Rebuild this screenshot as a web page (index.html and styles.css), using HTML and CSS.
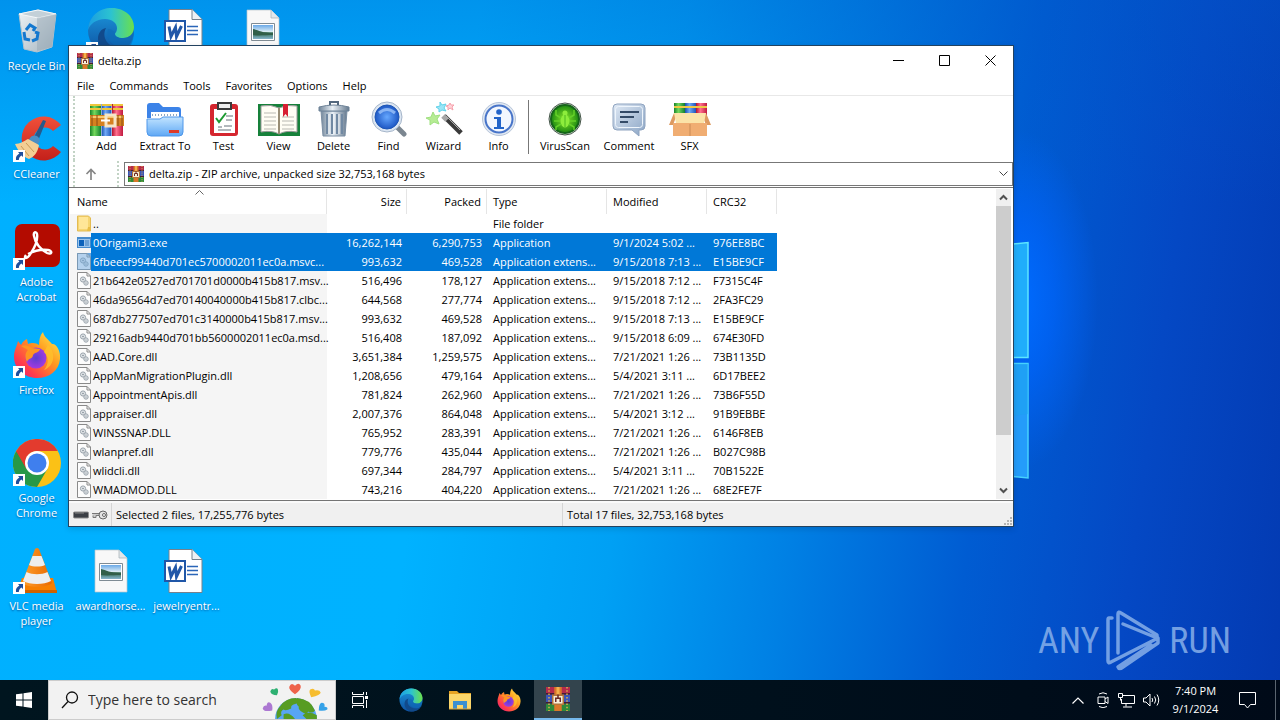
FILE: index.html
```html
<!DOCTYPE html>
<html lang="en">
<head>
<meta charset="utf-8">
<title>delta.zip</title>
<link rel="stylesheet" href="styles.css">
</head>
<body>
<svg class="sprite" aria-hidden="true">
  <defs>
    <linearGradient id="g-edge" x1="0" y1="0" x2="1" y2="0"><stop offset="0" stop-color="#1b9de2"/><stop offset=".5" stop-color="#2cc3d0"/><stop offset="1" stop-color="#6be04c"/></linearGradient>
    <linearGradient id="g-edge2" x1="0" y1="0" x2="0" y2="1"><stop offset="0" stop-color="#1c98dd"/><stop offset="1" stop-color="#0d50a0"/></linearGradient>
    <linearGradient id="g-fox" x1="1" y1="0" x2="0" y2="1"><stop offset="0" stop-color="#fff44f"/><stop offset=".4" stop-color="#ff9a1f"/><stop offset=".75" stop-color="#ff3c4c"/><stop offset="1" stop-color="#e31587"/></linearGradient>
    <radialGradient id="g-foxin"><stop offset="0" stop-color="#5a3fd0"/><stop offset="1" stop-color="#a33ae0"/></radialGradient>
    <linearGradient id="g-bin" x1="0" y1="0" x2="1" y2="1"><stop offset="0" stop-color="#eef3f6"/><stop offset="1" stop-color="#a4b4bf"/></linearGradient>
    <linearGradient id="g-cc" x1="0" y1="0" x2="0" y2="1"><stop offset="0" stop-color="#f0503a"/><stop offset="1" stop-color="#c4201a"/></linearGradient>
    <linearGradient id="g-pic" x1="0" y1="0" x2="0" y2="1"><stop offset="0" stop-color="#6aa9e8"/><stop offset=".5" stop-color="#e0eff5"/><stop offset=".55" stop-color="#2f6b50"/><stop offset="1" stop-color="#86b4cc"/></linearGradient>
    <linearGradient id="g-fold" x1="0" y1="0" x2="0" y2="1"><stop offset="0" stop-color="#c2e4ff"/><stop offset="1" stop-color="#5fa8f5"/></linearGradient>
    <linearGradient id="g-steel" x1="0" y1="0" x2="1" y2="0"><stop offset="0" stop-color="#73879b"/><stop offset=".45" stop-color="#e9f0f6"/><stop offset="1" stop-color="#65798e"/></linearGradient>
    <linearGradient id="g-cmt" x1="0" y1="0" x2="1" y2="1"><stop offset="0" stop-color="#dfe9f5"/><stop offset="1" stop-color="#8ba5c5"/></linearGradient>
    <radialGradient id="g-lens"><stop offset="0" stop-color="#66a8ff"/><stop offset="1" stop-color="#1d57c4"/></radialGradient>
    <radialGradient id="g-virus"><stop offset="0" stop-color="#8be62c"/><stop offset="1" stop-color="#1c8a10"/></radialGradient>
    <linearGradient id="g-cone" x1="0" y1="0" x2="1" y2="0"><stop offset="0" stop-color="#ff9e2c"/><stop offset="1" stop-color="#e96a00"/></linearGradient>
    <linearGradient id="g-red" x1="0" y1="0" x2="1" y2="0"><stop offset="0" stop-color="#b3122f"/><stop offset=".4" stop-color="#ff6f8f"/><stop offset="1" stop-color="#c01a3f"/></linearGradient>
    <linearGradient id="g-green" x1="0" y1="0" x2="1" y2="0"><stop offset="0" stop-color="#17832a"/><stop offset=".4" stop-color="#74d85c"/><stop offset="1" stop-color="#128030"/></linearGradient>
    <linearGradient id="g-blue" x1="0" y1="0" x2="1" y2="0"><stop offset="0" stop-color="#1a4fae"/><stop offset=".4" stop-color="#6fa8f6"/><stop offset="1" stop-color="#1e55b8"/></linearGradient>
  </defs>
  <symbol id="rar" viewBox="0 0 16 16">
    <path d="M0 0h16v5H0z" fill="#b32b4c"/><path d="M0 5h16v6H0z" fill="#3b55b6"/><path d="M0 11h16v5H0z" fill="#2d8a3a"/>
    <path d="M0 4.500h16M0 10.500h16" stroke="#461c33"/><path d="M2 0v16M14 0v16" stroke="#e0b04a" stroke-dasharray="1 1.200"/>
    <path d="M5.500 0h5v16h-5z" fill="#d9782a"/><path d="M7 0h2v5H7z" fill="#f4b04c"/><path d="M4.500 5.500h7v6h-7z" fill="#f7eed8" stroke="#b4763a"/><path d="M6.500 10V7.500h3V10M8 5v3" fill="none" stroke="#6d2a25"/>
  </symbol>
  <symbol id="dll" viewBox="0 0 14 17">
    <path d="M.5.5H10l3.500 3.500V16.500H.5z" fill="#fcfcfc" stroke="#8a8a8a"/><path d="M10 .5V4h3.500" fill="none" stroke="#8a8a8a"/>
    <circle cx="6" cy="7.500" r="2.600" fill="#dfe3e6" stroke="#9aa4ac"/><circle cx="6" cy="7.500" r=".8" fill="#7e8a94"/><circle cx="9" cy="11" r="2.200" fill="#dfe3e6" stroke="#9aa4ac"/><circle cx="9" cy="11" r=".6" fill="#7e8a94"/>
  </symbol>
  <symbol id="shortcut" viewBox="0 0 12 12">
    <path d="M0 0h12v12H0z" fill="#fff"/><path d="M5 2h5v5L8.400 5.500C6.500 7 6 8 5.800 10H3C2.500 7 4 5 6.400 3.600z" fill="#1f4f9c"/>
  </symbol>
  <symbol id="word" viewBox="0 0 48 48">
    <path d="M14 2.500h23l10 10V45.500H14z" fill="#fff" stroke="#77818c"/><path d="M37 2.500v10h10" fill="#eef1f4" stroke="#77818c"/>
    <path d="M32 19.500h11M32 23.500h11M32 27.500h11" stroke="#2b66b8" stroke-width="1.500"/>
    <path d="M10 14h20v20H10z" fill="#fff" stroke="#2057a8" stroke-width="2"/><path d="M14 19.500l2 10 4.500-9 1 9 5-10.500" fill="none" stroke="#2057a8" stroke-width="3"/>
  </symbol>
  <symbol id="photo" viewBox="0 0 48 48">
    <path d="M8 3h24l8 8v34H8z" fill="#f8f8f8" stroke="#b9c4cb" stroke-width=".7"/><path d="M32 3v8h8" fill="#e2e7ea" stroke="#a5afb5" stroke-width=".7"/>
    <path d="M12.500 16.500h23v17h-23z" fill="#fff" stroke="#7f8b94"/><path d="M14 18h20v14H14z" fill="url(#g-pic)"/><path d="M14 22c5 1 9 4 20 4v2c-8 0-14 1-20 0z" fill="#315f49"/>
  </symbol>
  <symbol id="edge" viewBox="0 0 48 48">
    <circle cx="24" cy="24" r="23" fill="url(#g-edge2)"/>
    <path d="M1 23C2 9 12 1 25 1c13 0 22 9 22 19 0 7-5 11-11 11-5 0-8-2-8-4 0-1 2-2 2-6 0-5-5-9-12-9C9 12 3 17 1 23z" fill="url(#g-edge)"/>
    <path d="M19 21c-5 9 2 20 14 20 4 0 8-1 11-3-4 6-11 9-19 9-8-1-14-8-14-15 0-6 3-10 8-11z" fill="#114a8b"/>
    <path d="M28 27c0 3 4 5 9 4 5 0 8-3 10-7 0 5-1 10-3 14-3 2-15 5-22-5-2-4-2-8-1-11 3 0 7 2 7 5z" fill="#0e6bb8" opacity=".65"/>
  </symbol>
  <symbol id="firefox" viewBox="0 0 48 48">
    <path d="M30 1c1 5 5 7 9 12 4-1 9 7 8 15-1 12-11 19-23 19S1 38 1 26c0-7 3-11 4-16l3 4c2-4 4-5 6-6l1 5c5-2 8-1 11 1 0-5 1-10 4-13z" fill="url(#g-fox)"/>
    <circle cx="23" cy="27" r="10.500" fill="url(#g-foxin)"/>
    <path d="M8 15c5-2 8 0 11 2l8 1c-1 4-5 3-7 6 0 4-5 3-6 7-3-6-1-10 1-12z" fill="#ff9521"/><path d="M35 14c8 7 7 21-4 25 5-6 5-13 0-18z" fill="#ffc12c" opacity=".8"/>
  </symbol>
</svg>

<div class="screen">
<main class="desktop">
  <svg class="wall-logo" viewBox="0 0 30 240" aria-hidden="true">
    <path d="M0 4 15 2.500V117.500H0z" fill="#20adfb"/><path d="M0 4 15 2.500V117.500H0" fill="none" stroke="#5ce6ff" stroke-width="1.500"/>
    <path d="M0 123.500h15V238L0 236.500z" fill="#249cfa"/><path d="M0 123.500h15V238L0 236.500" fill="none" stroke="#46d2fd" stroke-width="1.500"/><path d="M0 176l15-2v-50H0z" fill="#1aa3ef" opacity=".5"/>
  </svg>

  <div class="shortcuts">
    <a class="shortcut c1 r1" href="#"><svg class="big" viewBox="0 0 48 48"><path d="M6 7 25 3l18 4-4 33-15 5-13-3z" fill="url(#g-bin)" stroke="#b5c3cc"/><path d="M6 7l19-4 18 4-18 4z" fill="#c3d0d8" stroke="#f5f8fa"/><path d="M24 11v33l15-4 4-33z" fill="#93a5b2" opacity=".45"/><path d="M13 23l4-5 5 3-2 3M11 25l1 7 5 1M19 34l5-2 1-6-3-1" fill="none" stroke="#1478cf" stroke-width="3"/></svg><span>Recycle Bin</span></a>
    <a class="shortcut c1 r2" href="#"><svg class="big" viewBox="0 0 48 48"><path d="M48 10A22 22 0 1 0 48 37L40 31a11 11 0 1 1 0-15z" fill="url(#g-cc)"/><path d="M30 5l3 1-8 20-5-2z" fill="#255a8c"/><path d="M17 23c3-4 9-3 10 3l-5 8-9-5z" fill="#4a8fc4"/><path d="M2 29c5 0 9-3 13-5l11 6c-1 7-5 12-10 14-6-2-11-8-14-15z" fill="#f3cf94"/><path d="M8 31l8 10M13 28l8 9" stroke="#c99a58"/></svg><svg class="arrow"><use href="#shortcut"/></svg><span>CCleaner</span></a>
    <a class="shortcut c1 r3" href="#"><svg class="big" viewBox="0 0 48 48"><rect x="2" y="1" width="45" height="43" rx="7" fill="#b30b00"/><path d="M13 32c-3 4 1 5 5-2 4-6 7-13 6-19-1-3-4-2-3 2 1 7 7 14 13 17 5 2 6-2 1-3-6-1-14 1-20 4" fill="none" stroke="#fff" stroke-width="2.400"/></svg><svg class="arrow"><use href="#shortcut"/></svg><span>Adobe Acrobat</span></a>
    <a class="shortcut c1 r4" href="#"><svg class="big"><use href="#firefox"/></svg><svg class="arrow"><use href="#shortcut"/></svg><span>Firefox</span></a>
    <a class="shortcut c1 r5" href="#"><svg class="big" viewBox="0 0 48 48"><circle cx="24" cy="24" r="24" fill="#fbc116"/><path d="M3.200 12A24 24 0 0 0 24 48l10.400-18L24 24z" fill="#279847"/><path d="M3.200 12A24 24 0 0 1 44.800 12H24a12 12 0 0 0-10.400 6L13.600 30z" fill="#e33b2e"/><path d="M3.200 12L13.600 30l4-14-6-3z" fill="#e33b2e"/><circle cx="24" cy="24" r="12" fill="#fff"/><circle cx="24" cy="24" r="9.500" fill="#3f7fee"/></svg><svg class="arrow"><use href="#shortcut"/></svg><span>Google Chrome</span></a>
    <a class="shortcut c1 r6" href="#"><svg class="big" viewBox="0 0 48 48"><path d="M9 31h31l4 15H4z" fill="#f77f00"/><path d="M4 43h40v3H4z" fill="#cf6200"/><path d="M22 2q2-2 4 0l13 34c-5 5-25 5-30 0z" fill="url(#g-cone)"/><path d="M19.500 9h9l3.500 9c-4 2-12 2-16 0zM13.500 25c6 3 15 3 21 0l3.500 9c-7 4-21 4-28 0z" fill="#eee"/></svg><svg class="arrow"><use href="#shortcut"/></svg><span>VLC media player</span></a>
    <a class="shortcut c2 r1" href="#" aria-label="Edge"><svg class="big"><use href="#edge"/></svg><svg class="arrow"><use href="#shortcut"/></svg></a>
    <a class="shortcut c2 r6" href="#"><svg class="big"><use href="#photo"/></svg><span>awardhorse...</span></a>
    <a class="shortcut c3 r1" href="#" aria-label="Document"><svg class="big doc"><use href="#word"/></svg></a>
    <a class="shortcut c3 r6" href="#"><svg class="big doc"><use href="#word"/></svg><span>jewelryentr...</span></a>
    <a class="shortcut c4 r1" href="#" aria-label="Picture"><svg class="big"><use href="#photo"/></svg></a>
  </div>

  <div class="watermark"><span>ANY</span>
    <svg viewBox="0 0 56 62" aria-hidden="true"><g fill="none" stroke="currentColor" stroke-width="3.500" stroke-linejoin="round" stroke-linecap="round"><path d="M6 8H3q-1 0-1 2v41q0 3 3 1L52 28v5L17 57q-4 3-5 0L45 35"/><path d="M12 43V4q0-3 3-1l36 22v3L17 14"/></g></svg>
    <span>RUN</span></div>

  <section class="window">
    <header class="titlebar">
      <svg class="small"><use href="#rar"/></svg><h1>delta.zip</h1>
      <div class="controls">
        <button aria-label="Minimize"><svg viewBox="0 0 11 11"><path d="M0 5.500h11" stroke="#000"/></svg></button>
        <button aria-label="Maximize"><svg viewBox="0 0 11 11"><path d="M.5.5h10v10H.5z" fill="none" stroke="#000"/></svg></button>
        <button aria-label="Close"><svg viewBox="0 0 11 11"><path d="M.5.5l10 10M10.500.5l-10 10" stroke="#000"/></svg></button>
      </div>
    </header>
    <nav class="menubar"><button>File</button><button>Commands</button><button>Tools</button><button>Favorites</button><button>Options</button><button>Help</button></nav>

    <div class="bars">
    <div class="toolbar">
      <button class="tool"><svg viewBox="0 0 36 36"><path d="M1 3h11v32H1z" fill="url(#g-green)"/><path d="M12.500 3h10v32h-10z" fill="url(#g-blue)"/><path d="M23 3h11v32H23z" fill="url(#g-red)"/><path d="M1 4h11M13 4h10M24 4h10M1 8h11M24 8h10M13 8h10" stroke="#eec63b" stroke-width="2"/><path d="M1 14h34v11H1z" fill="#d58120"/><path d="M2 16h32" stroke="#f9c86d" stroke-width="2"/><path d="M3 14v11M8 14v11M29 14v11M33 14v11" stroke="#8a4d12"/><path d="M17 14h9v11h-9z" fill="none" stroke="#f5e6c8" stroke-width="3"/><path d="M12 19.500h9" stroke="#fff" stroke-width="2"/></svg>Add</button>
      <button class="tool wide"><svg viewBox="0 0 36 36"><path d="M0 5q0-3 3-3h9l4 4h15q3 0 3 3v8H0z" fill="#3c83e8"/><path d="M4 11h28v10H4z" fill="#fff"/><path d="M5 14h26" stroke="#8ba8c5" stroke-dasharray="1 2" stroke-width="2"/><path d="M0 18h13l3-2h20v15q0 4-4 4H4q-4 0-4-4z" fill="url(#g-fold)" stroke="#4e97ea"/><path d="M22 29h10v3H22z" fill="#dd3a28"/></svg>Extract To</button>
      <button class="tool"><svg viewBox="0 0 36 36"><rect x="4" y="3" width="28" height="32" rx="3" fill="#d5262f"/><path d="M8 8h21v24H8z" fill="#fff"/><path d="M12 2h13v6H12z" fill="#eee" stroke="#3a3a3a" stroke-width="2"/><path d="M10 17l3 4 7-9" fill="none" stroke="#1d9a32" stroke-width="2"/><path d="M20 15h7M20 19h6M12 26h4M18 25h8M12 29h13" stroke="#65707a"/></svg>Test</button>
      <button class="tool"><svg viewBox="0 0 42 36"><path d="M0 3h42v32H0z" fill="#16813a"/><path d="M3 5q10-2 18 2 8-4 18-2v26q-11-2-18 2-7-4-18-2z" fill="#fffdf4" stroke="#999"/><path d="M21 7v26" stroke="#988d75" stroke-width="2"/><path d="M6 12h12M6 16h12M6 20h12M6 24h12M6 28h12M24 16h12M24 20h12M24 24h12M24 28h12" stroke="#b9b9b2"/><path d="M25 3h5v13l-2.500-3-2.500 3z" fill="#d71f32"/></svg>View</button>
      <button class="tool"><svg viewBox="0 0 36 36"><path d="M5 10h26l-2 25H7z" fill="url(#g-steel)" stroke="#7a8ea3"/><path d="M11 13v20M16 13v20M21 13v20M26 13v20" stroke="#7189a3" stroke-width="2"/><path d="M13 13v20M18 13v20M23 13v20" stroke="#f4f8fb"/><path d="M3 6q15-4 30 0v4H3z" fill="url(#g-steel)" stroke="#6d8297"/><path d="M14 4V1h8v3" fill="none" stroke="#53687e" stroke-width="2"/></svg>Delete</button>
      <button class="tool"><svg viewBox="0 0 36 36"><path d="M25 25l8 8" stroke="#7b8690" stroke-width="5" stroke-linecap="round"/><circle cx="16" cy="16" r="15" fill="#dce6f2" stroke="#a6b6ca"/><circle cx="16" cy="16" r="12" fill="url(#g-lens)" stroke="#1e57b6"/><path d="M8 12q8-7 16 0" fill="none" stroke="#acd0ff" stroke-width="3" opacity=".7"/></svg>Find</button>
      <button class="tool"><svg viewBox="0 0 36 36"><path d="M18 15l17 17" stroke="#3a3a3a" stroke-width="5"/><path d="M17 15l4 4" stroke="#a6a6a6" stroke-width="5"/><path d="M20 15l14 14" stroke="#aaa"/><path d="M7 11l2 4 5-1-3 4 2 5-5-2-4 3v-5l-4-2 5-1z" fill="#b6ec94" stroke="#9fe080"/><path d="M14 1l2 3 4-1-2 4 2 3-4-1-3 2V8l-3-2 4-1z" fill="#9be6f7" stroke="#62d2ea"/><path d="M24 2l1 2h3l-2 2 1 3-3-2-2 2V6l-2-1 3-1z" fill="#ffd3d8" stroke="#f6a0ab"/></svg>Wizard</button>
      <button class="tool"><svg viewBox="0 0 36 36"><circle cx="18" cy="18" r="16.500" fill="#e2e9f2" stroke="#b7c5da"/><circle cx="18" cy="18" r="13.500" fill="#f3f7fe" stroke="#4875c9" stroke-width="2"/><circle cx="18" cy="11" r="2.800" fill="#2364c9"/><path d="M13 16h7v10h3v2H13v-2h3v-8h-3z" fill="#2364c9"/></svg>Info</button>
      <span class="divider"></span>
      <button class="tool wide"><svg viewBox="0 0 36 36"><circle cx="18" cy="18" r="16" fill="#dfe6e0" stroke="#445548"/><circle cx="18" cy="18" r="14" fill="url(#g-virus)" stroke="#16641a" stroke-width="2"/><ellipse cx="18" cy="20" rx="4.500" ry="6.500" fill="#8ded3c"/><circle cx="18" cy="12" r="2.500" fill="#8ded3c"/><path d="M14 17L9 14V9M22 17l5-3V9M13 20H7M23 20h6M14 23l-5 3v3M22 23l5 3v3" fill="none" stroke="#64d129" stroke-width="1.500"/><path d="M18 14v12" stroke="#4db81f"/></svg>VirusScan</button>
      <button class="tool wider"><svg viewBox="0 0 36 36"><path d="M6 3h24q4 0 4 4v18q0 4-4 4h-2v6l-7-6H6q-4 0-4-4V7q0-4 4-4z" fill="url(#g-cmt)" stroke="#8fa4c0"/><rect x="4.500" y="5.500" width="27" height="21" rx="3" fill="none" stroke="#eef5fc"/><path d="M9 11h19M9 16h14M9 21h8" stroke="#344b68" stroke-width="2"/></svg>Comment</button>
      <button class="tool"><svg viewBox="0 0 42 36"><path d="M5 2h11v14H5z" fill="url(#g-green)"/><path d="M16 2h11v14H16z" fill="url(#g-blue)"/><path d="M27 2h11v14H27z" fill="url(#g-red)"/><path d="M5 6h33" stroke="#efc844" stroke-width="2"/><path d="M5 12h32l5 12H37l-3-8H7l-3 8H0z" fill="#dd9a60"/><path d="M4 22h34v13H4z" fill="#f0ad72"/><path d="M5 12h32l-2 10H7z" fill="#fbe3a8"/><path d="M21 23v12" stroke="#c98a55"/></svg>SFX</button>
    </div>
    <div class="address">
      <button class="up" aria-label="Up"><svg viewBox="0 0 12 12"><path d="M6 12V1.500M1.500 6L6 1.500 10.500 6" fill="none" stroke="#868686" stroke-width="1.700"/></svg></button>
      <label class="path"><svg class="small"><use href="#rar"/></svg>
        <select aria-label="Archive path"><option>delta.zip - ZIP archive, unpacked size 32,753,168 bytes</option></select>
        <svg class="chev" viewBox="0 0 9 5"><path d="M.5.5l4 4 4-4" fill="none" stroke="#444"/></svg></label>
    </div>
    </div>

    <div class="list">
      <div class="files">
      <table>
        <colgroup><col class="w-name"><col class="w-num"><col class="w-num"><col class="w-type"><col class="w-date"><col class="w-crc"></colgroup>
        <thead><tr><th>Name<svg class="sort" viewBox="0 0 9 5"><path d="M.5 4.500l4-4 4 4" fill="none" stroke="#666"/></svg></th><th class="num">Size</th><th class="num">Packed</th><th>Type</th><th>Modified</th><th>CRC32</th></tr></thead>
        <tbody>
          <tr><td><div class="file"><svg viewBox="0 0 14 17"><path d="M.5 1h11l2 2v13H.5z" fill="#f6d571" stroke="#e3bb52"/><path d="M2 2h9v12H2z" fill="#ffe698"/><path d="M11 12h2v4h-3z" fill="#e9bd45"/></svg><span>..</span></div></td><td></td><td></td><td>File folder</td><td></td><td></td></tr>
          <tr class="sel"><td><div class="file"><svg viewBox="0 0 14 17"><path d="M0 3h14v11H0z" fill="#468bcc"/><path d="M1 5h12v8H1z" fill="#9dc5ec"/><path d="M2 6h5v6H2z" fill="#0b62bb"/><path d="M8 7h4M8 9h4M8 11h4" stroke="#3c7fbf"/></svg><span>0Origami3.exe</span></div></td><td>16,262,144</td><td>6,290,753</td><td>Application</td><td>9/1/2024 5:02 ...</td><td>976EE8BC</td></tr>
          <tr class="sel"><td><div class="file tint"><svg><use href="#dll"/></svg><span>6fbeecf99440d701ec5700002011ec0a.msvc...</span></div></td><td>993,632</td><td>469,528</td><td>Application extens...</td><td>9/15/2018 7:13 ...</td><td>E15BE9CF</td></tr>
          <tr><td><div class="file"><svg><use href="#dll"/></svg><span>21b642e0527ed701701d0000b415b817.msv...</span></div></td><td>516,496</td><td>178,127</td><td>Application extens...</td><td>9/15/2018 7:12 ...</td><td>F7315C4F</td></tr>
          <tr><td><div class="file"><svg><use href="#dll"/></svg><span>46da96564d7ed70140040000b415b817.clbc...</span></div></td><td>644,568</td><td>277,774</td><td>Application extens...</td><td>9/15/2018 7:12 ...</td><td>2FA3FC29</td></tr>
          <tr><td><div class="file"><svg><use href="#dll"/></svg><span>687db277507ed701c3140000b415b817.msv...</span></div></td><td>993,632</td><td>469,528</td><td>Application extens...</td><td>9/15/2018 7:13 ...</td><td>E15BE9CF</td></tr>
          <tr><td><div class="file"><svg><use href="#dll"/></svg><span>29216adb9440d701bb5600002011ec0a.msd...</span></div></td><td>516,408</td><td>187,092</td><td>Application extens...</td><td>9/15/2018 6:09 ...</td><td>674E30FD</td></tr>
          <tr><td><div class="file"><svg><use href="#dll"/></svg><span>AAD.Core.dll</span></div></td><td>3,651,384</td><td>1,259,575</td><td>Application extens...</td><td>7/21/2021 1:26 ...</td><td>73B1135D</td></tr>
          <tr><td><div class="file"><svg><use href="#dll"/></svg><span>AppManMigrationPlugin.dll</span></div></td><td>1,208,656</td><td>479,164</td><td>Application extens...</td><td>5/4/2021 3:11 ...</td><td>6D17BEE2</td></tr>
          <tr><td><div class="file"><svg><use href="#dll"/></svg><span>AppointmentApis.dll</span></div></td><td>781,824</td><td>262,960</td><td>Application extens...</td><td>7/21/2021 1:26 ...</td><td>73B6F55D</td></tr>
          <tr><td><div class="file"><svg><use href="#dll"/></svg><span>appraiser.dll</span></div></td><td>2,007,376</td><td>864,048</td><td>Application extens...</td><td>5/4/2021 3:12 ...</td><td>91B9EBBE</td></tr>
          <tr><td><div class="file"><svg><use href="#dll"/></svg><span>WINSSNAP.DLL</span></div></td><td>765,952</td><td>283,391</td><td>Application extens...</td><td>7/21/2021 1:26 ...</td><td>6146F8EB</td></tr>
          <tr><td><div class="file"><svg><use href="#dll"/></svg><span>wlanpref.dll</span></div></td><td>779,776</td><td>435,044</td><td>Application extens...</td><td>7/21/2021 1:26 ...</td><td>B027C98B</td></tr>
          <tr><td><div class="file"><svg><use href="#dll"/></svg><span>wlidcli.dll</span></div></td><td>697,344</td><td>284,797</td><td>Application extens...</td><td>5/4/2021 3:11 ...</td><td>70B1522E</td></tr>
          <tr><td><div class="file"><svg><use href="#dll"/></svg><span>WMADMOD.DLL</span></div></td><td>743,216</td><td>404,220</td><td>Application extens...</td><td>7/21/2021 1:26 ...</td><td>68E2FE7F</td></tr>
        </tbody>
      </table>
      </div>
      <div class="scroll">
        <button aria-label="Scroll up"><svg viewBox="0 0 9 7"><path d="M1 5.500L4.500 2 8 5.500" fill="none" stroke="#505050" stroke-width="2"/></svg></button>
        <div class="track"><div class="thumb"></div></div>
        <button aria-label="Scroll down"><svg viewBox="0 0 9 7"><path d="M1 1.500L4.500 5 8 1.500" fill="none" stroke="#505050" stroke-width="2"/></svg></button>
      </div>
    </div>
    <footer class="status">
      <div class="marks"><svg viewBox="0 0 16 10"><rect x=".5" y="2" width="15" height="6" rx="1" fill="#3b3f45" stroke="#8d8d8d"/><path d="M2 3h9" stroke="#888"/></svg><svg viewBox="0 0 16 10"><path d="M0 3.500h10v2H4v2H1v-2" fill="#ccc" stroke="#777"/><circle cx="11" cy="5" r="4" fill="#e3e3e3" stroke="#666"/><circle cx="12" cy="5" r="1.500" fill="#fff" stroke="#666"/></svg></div>
      <div class="cell">Selected 2 files, 17,255,776 bytes</div><div class="cell">Total 17 files, 32,753,168 bytes</div>
      <svg class="grip" viewBox="0 0 9 9"><path d="M6 0h2v2H6zM3 3h2v2H3zM6 3h2v2H6zM0 6h2v2H0zM3 6h2v2H3zM6 6h2v2H6z" fill="#b4b4b4"/></svg>
    </footer>
  </section>
</main>

<footer class="taskbar">
  <button class="tb start" aria-label="Start"><svg viewBox="0 0 16 16"><path d="M0 2.300L6.500 1.400V7.500H0zM7.500 1.200L16 0V7.500H7.500zM0 8.500h6.500v6.100L0 13.700zM7.500 8.500H16V16l-8.500-1.200z" fill="#fff"/></svg></button>
  <label class="search"><svg class="lens" viewBox="0 0 18 18"><circle cx="11" cy="6.500" r="5.500" fill="none" stroke="#111" stroke-width="1.300"/><path d="M7 10.500L1 17" stroke="#111" stroke-width="1.300"/></svg>
    <input type="text" placeholder="Type here to search" aria-label="Search">
    <svg class="globe" viewBox="0 0 72 40"><circle cx="37" cy="40" r="22" fill="#58a5f4"/><path d="M20 27q6-9 17-9 4 4 0 6-6 1-5 5-6 3-8 1-4 2-2 6l-5 4q-2-8 3-13zM38 18q14 1 19 13-3 4-7 1-2 4-6 1-5-3-4-6-4-3-2-9zM24 35q6-3 12 5H24zM44 36q6-5 15 0v4H48z" fill="#579c22"/><path d="M36 14q-7-5-6-8 2-5 6-1 4-4 6 0 1 4-6 9z" fill="#ee624b"/><path d="M17 15q-6 0-7-4 1-4 4-2 3-3 4 0 1 3-1 6z" fill="#2eb072"/><path d="M53 17q-3-6-1-8 4-2 5 1 5-1 6 2 0 3-10 5z" fill="#f6bd2f"/><path d="M12 31q-9 2-10-2 1-4 4-3 1-5 4-3 3 2 2 8z" fill="#ac78d2"/><path d="M61 31q0-7 3-8 4 0 3 4 4 0 3 3-3 2-9 1z" fill="#36a2e8"/></svg>
  </label>
  <button class="tb view" aria-label="Task view"><svg viewBox="0 0 16 16"><path d="M.5 0v2.500h11V0M.5 16v-2.500h11V16M.5 4.500h11v7H.5zM14.500 0v3M14.500 8v8" fill="none" stroke="#fff"/><path d="M13 4h3v3h-3z" fill="#fff"/></svg></button>
  <button class="tb" aria-label="Edge"><svg class="app"><use href="#edge"/></svg></button>
  <button class="tb" aria-label="File Explorer"><svg class="app" viewBox="0 0 24 24"><path d="M1 3h8l2 2h12v3H1z" fill="#e6a323"/><path d="M1 6h22v15H1z" fill="#fbd66a"/><path d="M5 13h14v8h-4v-4H9v4H5z" fill="#3b8fd0"/><path d="M1 21h22" stroke="#dca73c"/></svg></button>
  <button class="tb" aria-label="Firefox"><svg class="app"><use href="#firefox"/></svg></button>
  <button class="tb active" aria-label="WinRAR"><svg class="app"><use href="#rar"/></svg></button>
  <div class="tray">
    <svg class="t-up" viewBox="0 0 12 7"><path d="M.5 6.500L6 1l5.500 5.500" fill="none" stroke="#fff" stroke-width="1.200"/></svg>
    <svg class="t-cam" viewBox="0 0 12 16"><path d="M1 5h7v6.500H1zM8 7l3-2v6.500l-3-2M2 2q4-2.500 8 0M2 14.500q4 2.500 8 0" fill="none" stroke="#fff"/></svg>
    <svg class="t-net" viewBox="0 0 17 15"><path d="M5 2.500h11.500v8H3.500V6M8 10.500v3M5 14h9" fill="none" stroke="#fff"/><path d="M.5.5h4v4h-4zM2.500 4.500v3" fill="none" stroke="#fff"/></svg>
    <svg class="t-vol" viewBox="0 0 17 14"><path d="M.5 5h2.500l4-4v12l-4-4H.5zM9 5q1.500 2 0 4M11.500 3.500q2.500 3.500 0 7M14 1.500q3.500 5.500 0 11" fill="none" stroke="#fff"/></svg>
    <div class="clock"><time>7:40 PM</time><time>9/1/2024</time></div>
    <svg class="t-note" viewBox="0 0 17 17"><path d="M.5.500h16v12h-5L8.500 16l-3-3.500h-5z" fill="none" stroke="#fff"/></svg>
    <span class="peek"></span>
  </div>
</footer>
</div>
</body>
</html>
```
FILE: styles.css
```css
* { box-sizing: border-box; }
body { margin: 0; font: 11px/15px "Open Sans", "Noto Sans", sans-serif; color: #000; }
button { font: inherit; color: inherit; border: 0; background: none; padding: 0; }
svg { display: block; flex: none; }
.sprite { position: absolute; width: 0; height: 0; }
.screen { display: flex; flex-direction: column; min-height: 100vh; }

.desktop {
  position: relative; flex: 1; overflow: hidden;
  background:
    radial-gradient(ellipse 80px 170px at 1018px 300px, #006bff 0%, #0066ffaa 45%, #0060f000 100%),
    linear-gradient(180deg, #0058c855 0%, #0058c800 30%),
    linear-gradient(98deg, #00b0ff 0%, #00b2ff 35%, #00a0f4 50%, #0080e4 63%, #005cd2 76%, #0448c4 88%, #033ab2 100%);
}
.wall-logo { position: absolute; left: 1013px; top: 240px; width: 30px; height: 240px; }

.shortcuts { display: grid; grid-template-columns: 73px 75px 77px 75px; grid-template-rows: repeat(6, 108px); }
.shortcut { position: relative; display: flex; flex-direction: column; align-items: center; gap: 3px; padding-top: 7px; color: #fff; text-decoration: none; text-align: center; text-shadow: 0 1px 2px #0057a0; }
.shortcut .big { width: 48px; height: 48px; }
.shortcut .doc { margin-right: 15px; }
.shortcut .arrow { position: absolute; left: 13px; top: 42px; width: 12px; height: 12px; }
.shortcut span { max-width: 70px; }
.c1 { grid-column: 1; } .c2 { grid-column: 2; } .c3 { grid-column: 3; } .c4 { grid-column: 4; }
.r1 { grid-row: 1; } .r2 { grid-row: 2; } .r3 { grid-row: 3; } .r4 { grid-row: 4; } .r5 { grid-row: 5; } .r6 { grid-row: 6; }

.watermark { position: absolute; right: 49px; bottom: 8px; display: flex; align-items: center; gap: 7px; color: #8fb6ec; opacity: .8; font: 36px/62px "Roboto Condensed", "Liberation Sans Narrow", sans-serif; }
.watermark svg { width: 56px; height: 62px; }

.window { position: absolute; left: 68px; right: 266px; top: 45px; display: flex; flex-direction: column; background: #fff; border: 1px solid #23425f; box-shadow: 0 2px 6px #0002; }
.small { width: 16px; height: 16px; }
.titlebar { display: flex; align-items: center; height: 29px; padding-left: 8px; gap: 5px; }
.titlebar h1 { margin: 0; font-size: 11px; font-weight: 400; flex: 1; }
.controls { display: flex; }
.controls button { width: 46px; height: 28px; display: grid; place-items: center; }
.controls svg { width: 11px; height: 11px; }
.menubar { display: flex; gap: 15px; height: 21px; padding-left: 8px; border-bottom: 1px solid #e8e8e8; }

.bars { padding-left: 4px; }
.toolbar { display: flex; height: 64px; padding-left: 4px; border-left: 2px dotted #c2d3c5; }
.tool { width: 55px; display: flex; flex-direction: column; align-items: center; justify-content: flex-end; gap: 1px; padding-bottom: 7px; }
.tool svg { height: 36px; width: 42px; }
.tool.wide { width: 62px; }
.tool.wider { width: 66px; }
.divider { width: 1px; height: 54px; background: #777; margin: 4px 5px 0 2px; }
.address { display: flex; align-items: center; height: 27px; border-left: 2px dotted #c2d3c5; }
.up { width: 44px; height: 26px; padding-left: 10px; border-right: 2px dotted #c2d3c5; margin-right: 5px; }
.up svg { width: 12px; height: 12px; }
.path { flex: 1; display: flex; align-items: center; gap: 5px; height: 24px; padding: 0 4px 0 3px; border: 1px solid #777; }
.path select { flex: 1; appearance: none; border: 0; background: none; font: inherit; color: #000; padding: 0; }
.chev { width: 9px; height: 5px; }

.list { display: flex; border-top: 1px solid #747474; border-bottom: 1px solid #747474; padding: 1px 2px 1px 1px; }
.files { flex: 1; min-width: 0; overflow: hidden; }
table { width: 707px; table-layout: fixed; border-collapse: separate; border-spacing: 0; }
.w-name { width: 257px; } .w-num { width: 80px; } .w-type { width: 120px; } .w-date { width: 100px; } .w-crc { width: 70px; }
th { position: relative; height: 25px; padding: 0 5px 0 6px; font-weight: 400; text-align: left; border-right: 1px solid #e5e5e5; }
th:first-child { padding-left: 7px; }
th.num { text-align: right; }
.sort { position: absolute; left: 125px; top: 1px; width: 9px; height: 5px; }
td { height: 19px; padding: 0 0 0 6px; white-space: nowrap; line-height: 19px; }
td:nth-child(2), td:nth-child(3) { text-align: right; padding: 0 5px 0 0; }
td:first-child { background: #f5f5f5; padding-left: 7px; }
.file { display: flex; align-items: center; }
.file svg { width: 14px; height: 17px; }
.file span { flex: 1; min-width: 0; padding-left: 2px; }
.sel td:not(:first-child), .sel span { background: #0078d7; color: #fff; }
.tint svg { background: #6ba7de; }
.tint svg use { opacity: .5; }
.scroll { width: 15px; display: flex; flex-direction: column; background: #f0f0f0; }
.scroll button { height: 17px; display: grid; place-items: center; }
.scroll svg { width: 9px; height: 7px; }
.track { flex: 1; }
.thumb { height: 83%; background: #cdcdcd; }

.status { display: flex; align-items: center; height: 25px; background: #f0f0f0; border-top: 2px solid #fafafa; }
.marks { display: flex; gap: 3px; width: 42px; padding-left: 4px; }
.marks svg { width: 16px; height: 10px; }
.cell { flex: 1; padding: 4px; border-left: 1px solid #d5d5d5; }
.grip { width: 9px; height: 9px; align-self: flex-end; margin-left: -9px; }

.taskbar { display: flex; height: 40px; background: linear-gradient(90deg, #00151f, #00101c 60%, #000a18); color: #fff; }
.tb { width: 48px; display: grid; place-items: center; margin-right: 1px; }
.tb svg { width: 16px; height: 16px; }
.tb svg.app { width: 24px; height: 24px; }
.tb.start { margin: 0; }
.tb.view { margin-right: 3px; }
.tb.active { background: #33444d; border-bottom: 2px solid #76b9ed; }
.search { display: flex; align-items: center; width: 288px; background: #f2f2f2; padding-left: 12px; border: 1px solid #ccc; }
.lens { width: 18px; height: 18px; }
.search input { flex: 1; min-width: 0; border: 0; background: none; padding: 0 0 0 9px; font: 14px/20px "Open Sans", "Noto Sans", sans-serif; }
.search input::placeholder { color: #333; opacity: 1; }
.globe { width: 72px; height: 38px; margin-right: 4px; }
.tray { margin-left: auto; display: flex; align-items: center; gap: 8px; }
.t-up { width: 12px; height: 7px; margin-right: 5px; }
.t-cam { width: 12px; height: 16px; margin-right: 1px; }
.t-net { width: 17px; height: 15px; }
.t-vol { width: 17px; height: 14px; }
.clock { display: flex; flex-direction: column; text-align: center; line-height: 18px; width: 55px; }
.t-note { width: 17px; height: 17px; margin: 0 11px 0 8px; }
.peek { width: 5px; height: 40px; border-left: 1px solid #5b6570; }
```
